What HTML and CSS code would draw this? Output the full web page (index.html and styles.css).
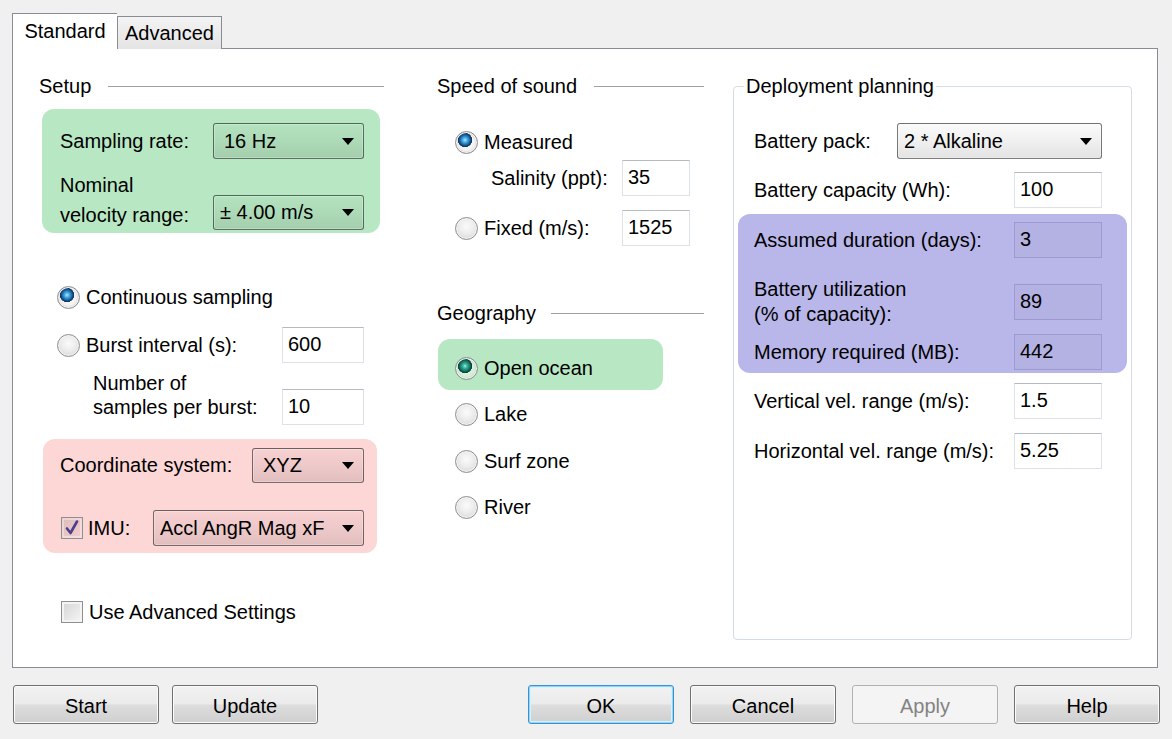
FILE: index.html
```html
<!DOCTYPE html>
<html>
<head>
<meta charset="utf-8">
<link rel="stylesheet" href="styles.css">
</head>
<body>
<div class="dialog">
  <div class="tabs">
    <div class="tab active">Standard</div>
    <div class="tab">Advanced</div>
  </div>
  <div class="panel">
    <div class="col col1">
      <div class="sec-head"><span>Setup</span><span class="rule"></span></div>
      <div class="hl hl-green setup-box">
        <div class="row">
          <span>Sampling rate:</span>
          <div class="combo w151 pad-wide"><span class="combo-text">16 Hz</span><span class="arrow"></span></div>
        </div>
        <div class="row row-end nominal">
          <span class="lh30">Nominal<br>velocity range:</span>
          <div class="combo w151 h35"><span class="combo-text">± 4.00 m/s</span><span class="arrow"></span></div>
        </div>
      </div>

      <div class="opt cont"><span class="radio on"></span><span>Continuous sampling</span></div>
      <div class="row burst">
        <div class="opt"><span class="radio"></span><span>Burst interval (s):</span></div>
        <div class="input w82">600</div>
      </div>
      <div class="row samples">
        <span class="lh24">Number of<br>samples per burst:</span>
        <div class="input w82 drop18">10</div>
      </div>

      <div class="hl hl-pink coord-box">
        <div class="row">
          <span>Coordinate system:</span>
          <div class="combo w112 h35 pad-wide"><span class="combo-text">XYZ</span><span class="arrow"></span></div>
        </div>
        <div class="row imu">
          <div class="opt"><span class="check on"><svg width="20" height="20" viewBox="0 0 20 20"><path d="M5 10.5 L8.5 15 L15 3.5" fill="none" stroke="#4b3f8c" stroke-width="2.6" stroke-linejoin="round" stroke-linecap="round"/></svg></span><span class="imu-label">IMU:</span></div>
          <div class="combo w211"><span class="combo-text">Accl AngR Mag xF</span><span class="arrow"></span></div>
        </div>
      </div>

      <div class="opt adv"><span class="check"></span><span>Use Advanced Settings</span></div>
    </div>

    <div class="col col2">
      <div class="sec-head"><span>Speed of sound</span><span class="rule"></span></div>
      <div class="opt measured"><span class="radio on"></span><span>Measured</span></div>
      <div class="row salinity">
        <span>Salinity (ppt):</span>
        <div class="input w68">35</div>
      </div>
      <div class="row fixed">
        <div class="opt"><span class="radio"></span><span>Fixed (m/s):</span></div>
        <div class="input w68">1525</div>
      </div>

      <div class="sec-head geo-head"><span>Geography</span><span class="rule"></span></div>
      <div class="hl hl-green geo-box">
        <div class="opt"><span class="radio on green"></span><span>Open ocean</span></div>
      </div>
      <div class="opt geo lake"><span class="radio"></span><span>Lake</span></div>
      <div class="opt geo surf"><span class="radio"></span><span>Surf zone</span></div>
      <div class="opt geo river"><span class="radio"></span><span>River</span></div>
    </div>

    <div class="col col3">
      <fieldset class="group">
        <legend>Deployment planning</legend>
        <div class="row">
          <span>Battery pack:</span>
          <div class="combo w205"><span class="combo-text">2 * Alkaline</span><span class="arrow"></span></div>
        </div>
        <div class="row capacity">
          <span>Battery capacity (Wh):</span>
          <div class="input w88">100</div>
        </div>
        <div class="hl hl-purple calc-box">
          <div class="row">
            <span>Assumed duration (days):</span>
            <div class="input w88 ro">3</div>
          </div>
          <div class="row util">
            <span class="lh25">Battery utilization<br>(% of capacity):</span>
            <div class="input w88 ro">89</div>
          </div>
          <div class="row memory">
            <span>Memory required (MB):</span>
            <div class="input w88 ro">442</div>
          </div>
        </div>
        <div class="row vert">
          <span>Vertical vel. range (m/s):</span>
          <div class="input w88">1.5</div>
        </div>
        <div class="row horiz">
          <span>Horizontal vel. range (m/s):</span>
          <div class="input w88">5.25</div>
        </div>
      </fieldset>
    </div>
  </div>

  <div class="buttons">
    <button class="btn">Start</button>
    <button class="btn gap13">Update</button>
    <button class="btn focus gap210">OK</button>
    <button class="btn gap16">Cancel</button>
    <button class="btn disabled gap16">Apply</button>
    <button class="btn gap16">Help</button>
  </div>
</div>
</body>
</html>
```

FILE: styles.css
```css
html, body {
  margin: 0;
  padding: 0;
}
body {
  width: 1172px;
  height: 739px;
  overflow: hidden;
  background: #f0f0f0;
  font-family: "Liberation Sans", Arial, sans-serif;
  font-size: 20px;
  color: #000;
}
.dialog {
  padding: 13px 0 0 12px;
}
.tabs {
  display: flex;
  align-items: flex-end;
  height: 36px;
  margin-bottom: -1px;
}
.tab {
  box-sizing: border-box;
  width: 105px;
  height: 33px;
  padding-top: 4px;
  line-height: 24px;
  text-align: center;
  border: 1px solid #898c95;
  border-bottom: none;
  background: linear-gradient(#f3f3f3, #e4e4e4);
}
.tab.active {
  position: relative;
  z-index: 1;
  height: 36px;
  padding-top: 5px;
  background: #fff;
  border-right: none;
}
.panel {
  box-sizing: border-box;
  width: 1146px;
  height: 620px;
  border: 1px solid #898c95;
  background: #fff;
  display: flex;
  padding: 25px 0 0 26px;
}
.col { box-sizing: border-box; }
.col1 { width: 345px; }
.col2 { width: 267px; margin-left: 53px; }
.col3 { width: 399px; margin-left: 29px; }

.sec-head {
  display: flex;
  align-items: center;
  gap: 17px;
  height: 24px;
  line-height: 24px;
}
.rule {
  flex: 1;
  height: 1px;
  background: #a0a0a0;
}
.row {
  display: flex;
  align-items: center;
  justify-content: space-between;
}
.row-end { align-items: flex-end; }
.lh30 { line-height: 30px; }
.lh24 { line-height: 24px; }
.lh25 { line-height: 25px; }

.hl {
  box-sizing: border-box;
  border-radius: 12px;
}
.hl-green { background: #b8e8c3; }
.hl-pink { background: #fdd6d6; }
.hl-purple { background: #b9b6e9; }

.combo {
  box-sizing: border-box;
  height: 36px;
  display: flex;
  align-items: center;
  justify-content: space-between;
  padding: 0 9px 0 6px;
  border: 1px solid rgba(0, 0, 0, 0.5);
  border-radius: 3px;
  background: linear-gradient(rgba(0, 0, 0, 0.02), rgba(0, 0, 0, 0.06) 50%, rgba(0, 0, 0, 0.11));
  box-shadow: inset 0 0 0 1px rgba(255, 255, 255, 0.25);
}
.pad-wide { padding-left: 10px; }
.h35 { height: 35px; }
.arrow {
  width: 0;
  height: 0;
  border-left: 6px solid transparent;
  border-right: 6px solid transparent;
  border-top: 7px solid #000;
}
.w151 { width: 151px; }
.w112 { width: 112px; }
.w211 { width: 211px; }
.w205 { width: 205px; }
.w82 { width: 82px; }
.w68 { width: 68px; }
.w88 { width: 88px; }

.input {
  box-sizing: border-box;
  height: 36px;
  padding: 4px 0 0 5px;
  line-height: 24px;
  background: #fff;
  border: 1px solid #dde2e8;
  border-top-color: #b5b9c0;
}
.input.ro {
  background: rgba(0, 0, 0, 0.025);
  border: 1px solid rgba(40, 30, 120, 0.16);
}
.drop18 { align-self: flex-start; margin-top: 18px; }

.opt {
  display: flex;
  align-items: center;
  gap: 6px;
  height: 24px;
  line-height: 24px;
}
.radio {
  box-sizing: border-box;
  flex-shrink: 0;
  width: 23px;
  height: 23px;
  border-radius: 50%;
  border: 1px solid #8e8f8f;
  background: radial-gradient(circle at 50% 40%, #fbfbfb 0, #ececec 45%, #cfcfcf 100%);
  box-shadow: inset 0 0 0 1px #f4f4f4;
}
.radio.on {
  background:
    radial-gradient(circle at 9px 8px, #b4e8fc 0, #55b6e6 2px, #1c72b4 4.5px, #0d3f74 6.3px, #1a2c48 6.9px, transparent 7.4px),
    radial-gradient(circle at 50% 50%, #fff 0, #f2f2f2 8px, #c9c9c9 11px);
}
.radio.on.green {
  background:
    radial-gradient(circle at 9px 8px, #a8eedc 0, #3fb7a2 2px, #15806e 4.5px, #0b4c42 6.3px, #1a3a30 6.9px, transparent 7.4px),
    radial-gradient(circle at 50% 50%, #e8f7ec 0, #d2eed9 8px, #a9cfb2 11px);
}
.check {
  box-sizing: border-box;
  flex-shrink: 0;
  width: 22px;
  height: 22px;
  border: 1px solid #8e8f8f;
  background: linear-gradient(135deg, #d4d4d4, #f6f6f6);
  box-shadow: inset 0 0 0 2px #f3f3f3;
  display: flex;
  align-items: center;
  justify-content: center;
}
.check.on {
  background: linear-gradient(135deg, rgba(0,0,0,0.12), rgba(0,0,0,0.04));
  box-shadow: inset 0 0 0 2px rgba(255,255,255,0.35);
}

/* column 1 */
.setup-box {
  width: 338px;
  margin: 11px 0 0 3px;
  padding: 14px 16px 3px 18px;
}
.nominal { margin-top: 11px; }
.cont { margin: 52px 0 0 18px; }
.burst {
  margin: 18px 20px 0 18px;
  height: 36px;
}
.samples {
  margin: 8px 20px 0 54px;
  align-items: flex-start;
}
.coord-box {
  width: 334px;
  margin: 14px 0 0 4px;
  padding: 9px 13px 7px 17px;
}
.imu { margin-top: 27px; }
.imu .check { margin-left: 1px; }
.imu .opt { gap: 5px; }
.adv { margin: 47px 0 0 22px; }

/* column 2 */
.measured { margin: 32px 0 0 18px; }
.salinity {
  margin: 6px 14px 0 54px;
  height: 36px;
}
.fixed {
  margin: 14px 14px 0 18px;
  height: 36px;
}
.geo-head { margin-top: 55px; gap: 15px; }
.geo-box {
  width: 225px;
  margin: 14px 0 0 1px;
  padding: 17px 0 10px 17px;
}
.geo { margin-left: 18px; }
.lake { margin-top: 12px; }
.surf { margin-top: 23px; }
.river { margin-top: 22px; }

/* column 3 */
.group {
  box-sizing: border-box;
  margin: 0;
  width: 399px;
  height: 566px;
  padding: 25px 29px 0 20px;
  border: 1px solid #d5dde4;
  border-radius: 4px;
}
.group legend {
  margin-left: -10px;
  padding: 0 2px;
  line-height: 24px;
}
.capacity { margin-top: 13px; }
.calc-box {
  margin: 6px -25px 0 -16px;
  padding: 8px 25px 3px 16px;
}
.util { margin-top: 19px; }
.memory { margin-top: 7px; }
.vert { margin-top: 10px; }
.horiz { margin-top: 14px; }

/* buttons */
.buttons {
  display: flex;
  margin-top: 17px;
  padding-left: 1px;
}
.btn {
  box-sizing: border-box;
  width: 146px;
  height: 39px;
  padding: 3px 0 0;
  font-family: "Liberation Sans", Arial, sans-serif;
  font-size: 20px;
  color: #000;
  border: 1px solid #707070;
  border-radius: 3px;
  background: linear-gradient(#f2f2f2 0%, #ebebeb 48%, #dddddd 52%, #cfcfcf 100%);
  box-shadow: inset 0 0 0 1px #fbfbfb;
}
.btn.focus {
  border-color: #3c8fd0;
  box-shadow: inset 0 0 0 1px #8fd8f6, inset 0 0 0 2px #d4f1fc;
}
.btn.disabled {
  border-color: #adb2b5;
  background: #f4f4f4;
  color: #838383;
  box-shadow: none;
}
.gap13 { margin-left: 13px; }
.gap210 { margin-left: 210px; }
.gap16 { margin-left: 16px; }
```
